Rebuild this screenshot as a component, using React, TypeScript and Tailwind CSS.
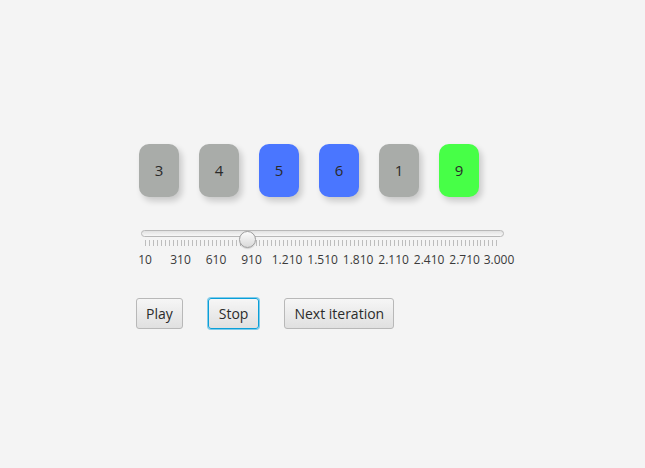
import React from "react";

interface Cell {
    value: number;
    color: string;
}

const cells: Cell[] = [
    { value: 3, color: "bg-[#a9aca9]" },
    { value: 4, color: "bg-[#a9aca9]" },
    { value: 5, color: "bg-[#4a76ff]" },
    { value: 6, color: "bg-[#4a76ff]" },
    { value: 1, color: "bg-[#a9aca9]" },
    { value: 9, color: "bg-[#47ff47]" },
];

const MIN = 10;
const MAX = 3000;
const VALUE = 875;
const TRACK_W = 363;
const PAD = 4; // ticks start a little inside the track

const majors = [10, 310, 610, 910, 1210, 1510, 1810, 2110, 2410, 2710, 3000];
const fmt = (v: number) => v.toLocaleString("de-DE");

const pos = (v: number) => PAD + ((v - MIN) / (MAX - MIN)) * (TRACK_W - PAD * 2 - 1);

const Slider = () => {
    const ticks: number[] = [];
    const step = 300 / 9;
    for (let v = MIN; v <= MAX + 0.01; v += step) ticks.push(v);

    return (
        <div className="relative w-[363px] h-[36px]">
            <div className="mt-[5px] h-[7px] w-full rounded-full border border-[#b8b8b8] bg-gradient-to-b from-[#e2e2e2] to-[#f7f7f7]" />
            <div
                className="absolute top-[1px] w-[17px] h-[17px] rounded-full border border-[#9c9c9c] bg-gradient-to-b from-[#fbfbfb] to-[#dadada] shadow-[0_1px_1px_rgba(0,0,0,0.15)]"
                style={{ left: pos(VALUE) - 8.5 }}
            />
            <svg className="mt-[2px] block" width={TRACK_W} height={7}>
                {ticks.map((v, i) => (
                    <line key={i} x1={Math.round(pos(v)) + 0.5} x2={Math.round(pos(v)) + 0.5} y1={1} y2={7} stroke="#bdbdbd" strokeWidth={1} />
                ))}
            </svg>
            {majors.map((v) => (
                <span
                    key={v}
                    className="absolute top-[24px] -translate-x-1/2 text-[12px] leading-none text-[#3a3a3a]"
                    style={{ left: pos(v) }}
                >
                    {fmt(v)}
                </span>
            ))}
        </div>
    );
};

const Button = ({ label, focused }: { label: string; focused?: boolean }) => (
    <button
        className={`h-[31px] px-[9px] rounded-[3px] text-[14px] text-[#2b2b2b] bg-gradient-to-b from-[#f6f6f6] to-[#e0e0e0] ${
            focused ? "px-[10px] border border-[#0a9fd8] shadow-[0_0_0_1px_#7fcbea]" : "border border-[#b8b8b8]"
        }`}
    >
        {label}
    </button>
);

const App = () => {
    return (
        <div className="w-full h-[468px] bg-[#f4f4f4] font-['Open_Sans','Noto_Sans',sans-serif]">
            <div className="flex flex-col pt-[144px] pl-[136px]">
                <div className="flex gap-[20px] pl-[3px]">
                    {cells.map((c, i) => (
                        <div
                            key={i}
                            className={`w-[40px] h-[53px] rounded-[10px] ${c.color} flex items-center justify-center text-[15px] text-[#2a2a2a] shadow-[3px_4px_6px_rgba(0,0,0,0.18)]`}
                        >
                            {c.value}
                        </div>
                    ))}
                </div>
                <div className="mt-[28px] pl-[5px]">
                    <Slider />
                </div>
                <div className="mt-[32px] flex gap-[25px]">
                    <Button label="Play" />
                    <Button label="Stop" focused />
                    <Button label="Next iteration" />
                </div>
            </div>
        </div>
    );
};

export default App;
